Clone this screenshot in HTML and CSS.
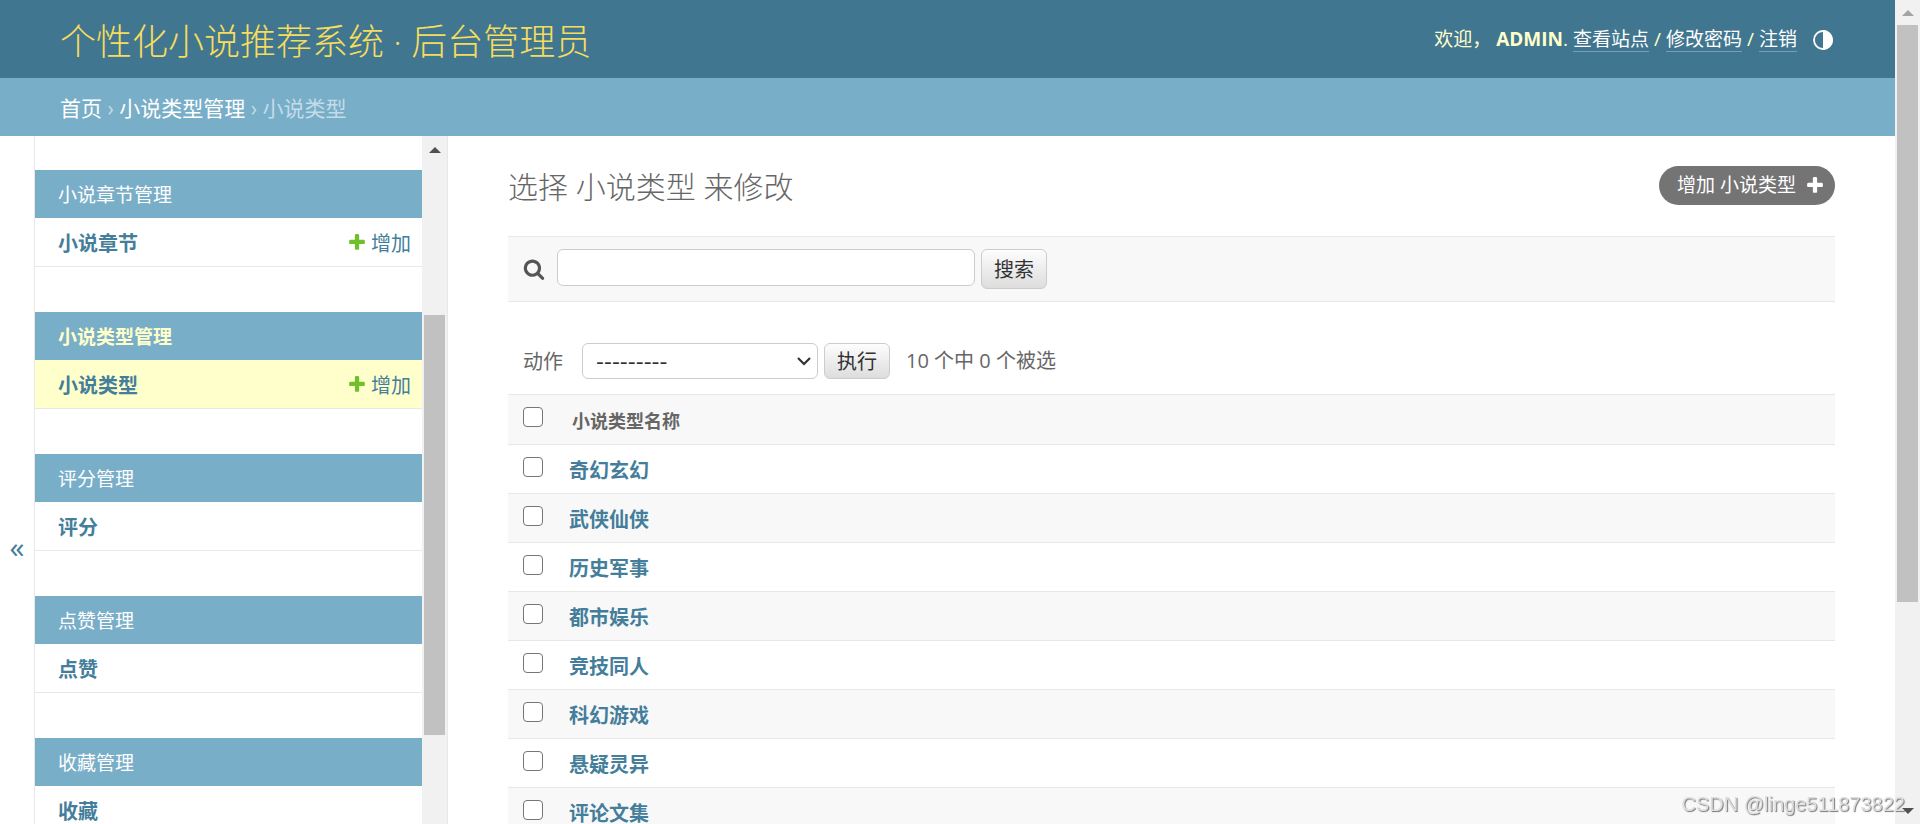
FILE: index.html
```html
<!DOCTYPE html>
<html lang="zh-Hans">
<head>
<meta charset="utf-8">
<title>选择 小说类型 来修改</title>
<link rel="stylesheet" href="styles.css">
</head>
<body>
<svg class="defs" aria-hidden="true">
  <symbol id="plus" viewBox="0 0 1792 1792"><path d="M1600 796v192q0 40-28 68t-68 28h-416v416q0 40-28 68t-68 28h-192q-40 0-68-28t-28-68v-416h-416q-40 0-68-28t-28-68v-192q0-40 28-68t68-28h416v-416q0-40 28-68t68-28h192q40 0 68 28t28 68v416h416q40 0 68 28t28 68z"/></symbol>
</svg>
<div class="window">
  <div class="app">
    <header class="header">
      <h1 class="brand"><a href="#">个性化小说推荐系统 · 后台管理员</a></h1>
      <div class="user-tools">
        <span>欢迎，</span>
        <span><strong>ADMIN</strong>.</span>
        <a href="#">查看站点</a><span>/</span><a href="#">修改密码</a><span>/</span><a href="#">注销</a>
        <button class="theme-toggle" type="button" aria-label="切换主题">
          <svg viewBox="0 0 20 20"><circle cx="10" cy="10" r="9" fill="none" stroke="currentColor" stroke-width="1.8"/><path d="M10 0a10 10 0 0 1 0 20z" fill="currentColor"/></svg>
        </button>
      </div>
    </header>
    <nav class="breadcrumbs" aria-label="路径"><a href="#">首页</a> › <a href="#">小说类型管理</a> › 小说类型</nav>
    <div class="body">
      <button class="nav-toggle" type="button" aria-label="切换导航">«</button>
      <nav class="sidebar" aria-label="侧边栏">
        <div class="modules">
          <section class="module">
            <h2><a href="#">小说章节管理</a></h2>
            <div class="model"><a class="name" href="#">小说章节</a><a class="add" href="#"><svg><use href="#plus"/></svg>增加</a></div>
          </section>
          <section class="module current">
            <h2><a href="#">小说类型管理</a></h2>
            <div class="model"><a class="name" href="#">小说类型</a><a class="add" href="#"><svg><use href="#plus"/></svg>增加</a></div>
          </section>
          <section class="module">
            <h2><a href="#">评分管理</a></h2>
            <div class="model"><a class="name" href="#">评分</a></div>
          </section>
          <section class="module">
            <h2><a href="#">点赞管理</a></h2>
            <div class="model"><a class="name" href="#">点赞</a></div>
          </section>
          <section class="module">
            <h2><a href="#">收藏管理</a></h2>
            <div class="model"><a class="name" href="#">收藏</a></div>
          </section>
        </div>
        <div class="scrollbar side-scroll" aria-hidden="true">
          <svg class="arrow" viewBox="0 0 12 6"><path d="M6 0l6 6H0z"/></svg>
          <div class="space-before"></div><div class="thumb"></div><div class="space-after"></div>
        </div>
      </nav>
      <main class="content">
        <div class="title-row">
          <h2>选择 小说类型 来修改</h2>
          <a class="add-button" href="#">增加 小说类型<svg><use href="#plus"/></svg></a>
        </div>
        <form class="search">
          <label for="q" aria-label="搜索"><svg viewBox="0 0 1792 1792"><path d="M1216 832q0-185-131.500-316.500t-316.500-131.500-316.500 131.500-131.500 316.500 131.500 316.500 316.500 131.500 316.500-131.500 131.500-316.500zm512 832q0 52-38 90t-90 38q-54 0-90-38l-343-342q-179 124-399 124-143 0-273.500-55.500t-225-150-150-225-55.500-273.500 55.500-273.500 150-225 225-150 273.500-55.500 273.500 55.500 225 150 150 225 55.500 273.500q0 220-124 399l343 343q37 37 37 90z"/></svg></label>
          <input id="q" type="text">
          <button class="btn" type="submit">搜索</button>
        </form>
        <form class="list">
          <div class="actions">
            <label for="action">动作</label>
            <span class="select-wrap">
              <select id="action"><option>---------</option></select>
              <svg viewBox="0 0 14 9"><path d="M1 1l6 6 6-6" fill="none" stroke="currentColor" stroke-width="2.200"/></svg>
            </span>
            <button class="btn" type="submit">执行</button>
            <span class="counter">10 个中 0 个被选</span>
          </div>
          <table>
            <thead><tr><th><input type="checkbox" aria-label="全选"></th><th>小说类型名称</th></tr></thead>
            <tbody>
              <tr><td><input type="checkbox" aria-label="奇幻玄幻"></td><td><a href="#">奇幻玄幻</a></td></tr>
              <tr><td><input type="checkbox" aria-label="武侠仙侠"></td><td><a href="#">武侠仙侠</a></td></tr>
              <tr><td><input type="checkbox" aria-label="历史军事"></td><td><a href="#">历史军事</a></td></tr>
              <tr><td><input type="checkbox" aria-label="都市娱乐"></td><td><a href="#">都市娱乐</a></td></tr>
              <tr><td><input type="checkbox" aria-label="竞技同人"></td><td><a href="#">竞技同人</a></td></tr>
              <tr><td><input type="checkbox" aria-label="科幻游戏"></td><td><a href="#">科幻游戏</a></td></tr>
              <tr><td><input type="checkbox" aria-label="悬疑灵异"></td><td><a href="#">悬疑灵异</a></td></tr>
              <tr><td><input type="checkbox" aria-label="评论文集"></td><td><a href="#">评论文集</a></td></tr>
            </tbody>
          </table>
        </form>
      </main>
    </div>
  </div>
  <div class="scrollbar page-scroll" aria-hidden="true">
    <svg class="arrow faded" viewBox="0 0 12 6"><path d="M6 0l6 6H0z"/></svg>
    <div class="thumb"></div><div class="space-after"></div>
    <svg class="arrow" viewBox="0 0 12 6"><path d="M0 0h12L6 6z"/></svg>
  </div>
</div>
<div class="watermark">CSDN @linge511873822</div>
</body>
</html>
```

FILE: styles.css
```css
:root {
  --primary: #79aec8;
  --secondary: #417690;
  --link: #447e9b;
  --accent: #f5dd5d;
  --pale: #ffffcc;
  --hairline: #e8e8e8;
  --quiet: #666;
}

* { box-sizing: border-box; }

body {
  margin: 0;
  font: 20px/24px "Open Sans", "Noto Sans CJK SC", sans-serif;
  color: #333;
  background: #fff;
}

a { color: inherit; text-decoration: none; }
h1, h2 { margin: 0; font-weight: 300; }
button, input, select { font: inherit; color: inherit; }
.defs { display: none; }

.window { display: flex; height: 100vh; overflow: hidden; }
.app { flex: 1; min-width: 0; display: flex; flex-direction: column; }

/* Header */
.header {
  display: flex;
  justify-content: space-between;
  align-items: center;
  flex: none;
  height: 78px;
  padding: 0 60px;
  background: var(--secondary);
  color: var(--pale);
}
.brand { padding-top: 6px; font-size: 36px; line-height: 48px; color: var(--accent); }
.user-tools {
  display: flex;
  align-items: center;
  gap: 5px;
  font-size: 19px;
}
.user-tools a { color: #fff; border-bottom: 1px solid #7a9eb1; }
.user-tools strong { font-weight: 700; }
.theme-toggle {
  margin: 2px 2px 0 11px;
  padding: 0;
  border: 0;
  background: none;
  color: #fff;
}
.theme-toggle svg { display: block; width: 20px; height: 20px; }

.breadcrumbs {
  flex: none;
  padding: 16px 60px 14px;
  font-size: 21px;
  line-height: 28px;
  background: var(--primary);
  color: #c4dce8;
}
.breadcrumbs a { color: #fff; }

/* Sidebar */
.body { flex: 1; min-height: 0; display: flex; overflow: hidden; }
.nav-toggle {
  flex: none;
  width: 34px;
  height: 100vh;
  padding: 0 0 2px;
  border: 0;
  background: #fff;
  color: var(--link);
  font-size: 30px;
}
.sidebar {
  flex: none;
  display: flex;
  width: 414px;
  border: solid var(--hairline);
  border-width: 0 1px;
}
.modules { flex: 1; padding-top: 34px; overflow: hidden; }
.module { margin-bottom: 45px; }
.module h2 {
  padding: 13px 23px 11px;
  font-size: 19px;
  line-height: 24px;
  font-weight: 400;
  background: var(--primary);
  color: #fff;
}
.model {
  display: flex;
  justify-content: space-between;
  padding: 14px 11px 10px 23px;
  border-bottom: 1px solid var(--hairline);
  color: var(--link);
}
.model .name { font-weight: 700; }
.add { display: flex; align-items: flex-start; gap: 4px; }
.add svg { width: 20px; height: 20px; fill: #70bf2b; }
.module.current h2 { font-weight: 700; color: var(--pale); }
.current .model { background: var(--pale); }

/* Scrollbars */
.scrollbar {
  flex: none;
  display: flex;
  flex-direction: column;
  align-items: center;
  width: 25px;
  padding: 10px 0;
  background: #f1f1f1;
}
.arrow { flex: none; width: 12px; height: 6px; fill: #505050; }
.arrow.faded { fill: #a3a3a3; margin-bottom: 9px; }
.thumb { width: 21px; background: #c1c1c1; }
.page-scroll .thumb { flex: 577; }
.page-scroll .space-after { flex: 206; }
.side-scroll { padding: 11px 0 10px; }
.side-scroll .space-before { flex: 162; }
.side-scroll .thumb { flex: 420; }
.side-scroll .space-after { flex: 79; }

/* Content */
.content { flex: 1; min-width: 0; padding: 30px 60px 0; }
.title-row {
  display: flex;
  justify-content: space-between;
  align-items: flex-start;
  margin-bottom: 28px;
}
.title-row h2 { font-size: 30px; line-height: 42px; color: var(--quiet); }
.add-button {
  display: flex;
  align-items: center;
  gap: 9px;
  height: 39px;
  padding: 0 10px 1px 18px;
  border-radius: 20px;
  background: #747474;
  color: #fff;
  font-size: 19px;
}
.add-button svg { width: 20px; height: 20px; fill: #fff; }

.search {
  display: flex;
  align-items: flex-start;
  gap: 6px;
  padding: 12px 15px;
  background: #f8f8f8;
  border: solid var(--hairline);
  border-width: 1px 0;
}
.search label { align-self: center; margin-right: 6px; }
.search label svg { display: block; width: 22px; height: 22px; fill: #555; }
.search input {
  width: 418px;
  height: 37px;
  padding: 4px 8px;
  border: 1px solid #ccc;
  border-radius: 6px;
  background: #fff;
}
.btn {
  height: 40px;
  padding: 2px 12px 0;
  border: 1px solid #ccc;
  border-radius: 6px;
  background: linear-gradient(#fdfdfd, #ddd);
}

.actions {
  display: flex;
  align-items: center;
  gap: 6px;
  margin: 41px 0 15px;
  padding-left: 15px;
  color: var(--quiet);
}
.actions label { margin-right: 13px; padding-top: 2px; }
.actions .btn { height: 36px; color: #333; }
.select-wrap { position: relative; display: flex; color: #333; }
.select-wrap select {
  appearance: none;
  width: 236px;
  height: 36px;
  padding: 2px 13px 0;
  border: 1px solid #ccc;
  border-radius: 6px;
  background: #fff;
  font-family: "DejaVu Sans", sans-serif;
  font-size: 22px;
}
.select-wrap svg {
  position: absolute;
  top: 14px;
  right: 7px;
  width: 14px;
  height: 9px;
  pointer-events: none;
}
.counter { margin-left: 10px; }

table { width: 100%; border-collapse: collapse; }
th, td { padding: 14px 0 10px 15px; border-bottom: 1px solid var(--hairline); text-align: left; vertical-align: top; }
th { padding-bottom: 11px; border-top: 1px solid var(--hairline); font-size: 18px; color: var(--quiet); background: #f8f8f8; }
th:first-child, td:first-child { width: 47px; padding-top: 12px; }
th:last-child { padding-left: 17px; }
td { font-weight: 700; color: var(--link); }
tbody tr:nth-child(even) { background: #f8f8f8; }
td:last-child { padding-left: 14px; }
input[type="checkbox"] {
  appearance: none;
  display: block;
  width: 20px;
  height: 20px;
  margin: 0;
  border: 1px solid #767676;
  border-radius: 4px;
  background: #fff;
}

.watermark {
  position: fixed;
  right: 15px;
  bottom: 8px;
  font: 20px/24px "Liberation Sans", sans-serif;
  color: #ddd;
  text-shadow: 1px 1px 1px #777;
}
```
